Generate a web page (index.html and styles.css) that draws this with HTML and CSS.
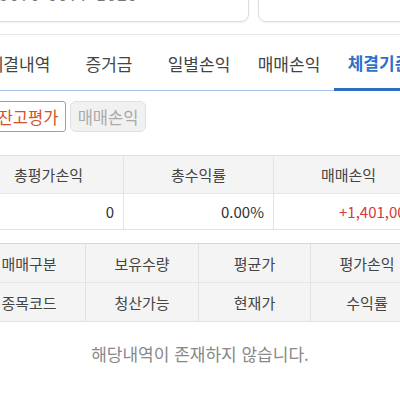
FILE: index.html
```html
<!DOCTYPE html>
<html lang="ko">
<head>
<meta charset="utf-8">
<link rel="stylesheet" href="styles.css">
</head>
<body>
<div class="page">
  <div class="accounts">
    <div class="acct acct-left"><span class="acct-no">5070-0077-1020</span></div>
    <div class="acct acct-right"></div>
  </div>
  <div class="tabs">
    <div class="tab">체결내역</div>
    <div class="tab">증거금</div>
    <div class="tab">일별손익</div>
    <div class="tab">매매손익</div>
    <div class="tab active">체결기준</div>
  </div>
  <div class="subtabs">
    <div class="sub on">잔고평가</div>
    <div class="sub off">매매손익</div>
  </div>
  <div class="summary">
    <div class="th">총평가손익</div>
    <div class="th">총수익률</div>
    <div class="th">매매손익</div>
    <div class="td">0</div>
    <div class="td">0.00%</div>
    <div class="td red">+1,401,000</div>
  </div>
  <div class="grid">
    <div class="gh">매매구분</div>
    <div class="gh">보유수량</div>
    <div class="gh">평균가</div>
    <div class="gh">평가손익</div>
    <div class="gh">종목코드</div>
    <div class="gh">청산가능</div>
    <div class="gh">현재가</div>
    <div class="gh">수익률</div>
  </div>
  <div class="empty">해당내역이 존재하지 않습니다.</div>
</div>
</body>
</html>
```

FILE: styles.css
```css
html, body {
  margin: 0;
  padding: 0;
  background: #fff;
}
body {
  width: 400px;
  height: 400px;
  overflow: hidden;
  font-family: "Noto Sans CJK KR", "Noto Sans", sans-serif;
  color: #444;
}
.page {
  width: 452px;
  margin-left: -26px;
}
.accounts {
  display: flex;
  gap: 9px;
  margin-top: -30px;
  height: 52px;
}
.acct {
  border: 1px solid #dcdcdc;
  border-radius: 8px;
  box-shadow: 0 1px 2px rgba(0,0,0,0.06);
  display: flex;
  align-items: center;
  box-sizing: border-box;
}
.acct-left {
  width: 275px;
  padding-left: 24px;
  padding-bottom: 6px;
}
.acct-right {
  flex: 1;
}
.acct-no {
  font-size: 17px;
  color: #777;
  letter-spacing: 1px;
}
.tabs {
  display: flex;
  margin-top: 12px;
  border-top: 1px solid #e6e6e6;
  border-bottom: 1px solid #a9c6ea;
  height: 55px;
}
.tab {
  width: 90px;
  flex: none;
  display: flex;
  align-items: center;
  justify-content: center;
  font-size: 17px;
  color: #444;
  box-sizing: border-box;
  padding-top: 2px;
}
.tab.active {
  color: #2f6fcb;
  font-weight: bold;
  border-bottom: 3px solid #2f6cc4;
  margin-bottom: -1px;
}
.subtabs {
  display: flex;
  gap: 4px;
  margin: 10px 0 0 16px;
}
.sub {
  width: 76px;
  height: 31px;
  box-sizing: border-box;
  display: flex;
  align-items: center;
  justify-content: center;
  font-size: 16.5px;
  border-radius: 3px;
}
.sub.on {
  border: 1px solid #de8a6a;
  color: #d2532a;
  background: #fff;
}
.sub.off {
  border: 1px solid #e0e0e0;
  color: #aaa;
  background: #f1f1f1;
  border-radius: 6px;
}
.summary {
  display: grid;
  grid-template-columns: 150px 150px 150px;
  margin-top: 23px;
  border-top: 1px solid #e2e2e2;
  border-bottom: 1px solid #e2e2e2;
}
.th {
  height: 37px;
  background: #f4f4f4;
  display: flex;
  align-items: center;
  justify-content: center;
  font-size: 15px;
  color: #444;
  border-right: 1px solid #e4e4e4;
  border-bottom: 1px solid #e6e6e6;
}
.td {
  height: 35px;
  display: flex;
  align-items: center;
  justify-content: flex-end;
  padding-right: 9px;
  font-size: 15px;
  color: #333;
  border-right: 1px solid #e4e4e4;
}
.td.red {
  color: #d33b3b;
  justify-content: flex-start;
  padding-left: 65px;
}
.grid {
  display: grid;
  grid-template-columns: 113px 113px 112px 113px;
  margin-top: 13px;
  border-top: 1px solid #d8d8d8;
  border-bottom: 1px solid #e2e2e2;
  margin-left: -1px;
}
.gh {
  height: 38px;
  background: #f4f4f4;
  display: flex;
  align-items: center;
  justify-content: center;
  font-size: 15px;
  color: #444;
  border-right: 1px solid #e2e2e2;
  border-bottom: 1px solid #e6e6e6;
}
.gh:nth-child(n+5) {
  border-bottom: none;
}
.empty {
  text-align: center;
  font-size: 17px;
  color: #888;
  padding-top: 19px;
  width: 400px;
  margin-left: 26px;
}
```
